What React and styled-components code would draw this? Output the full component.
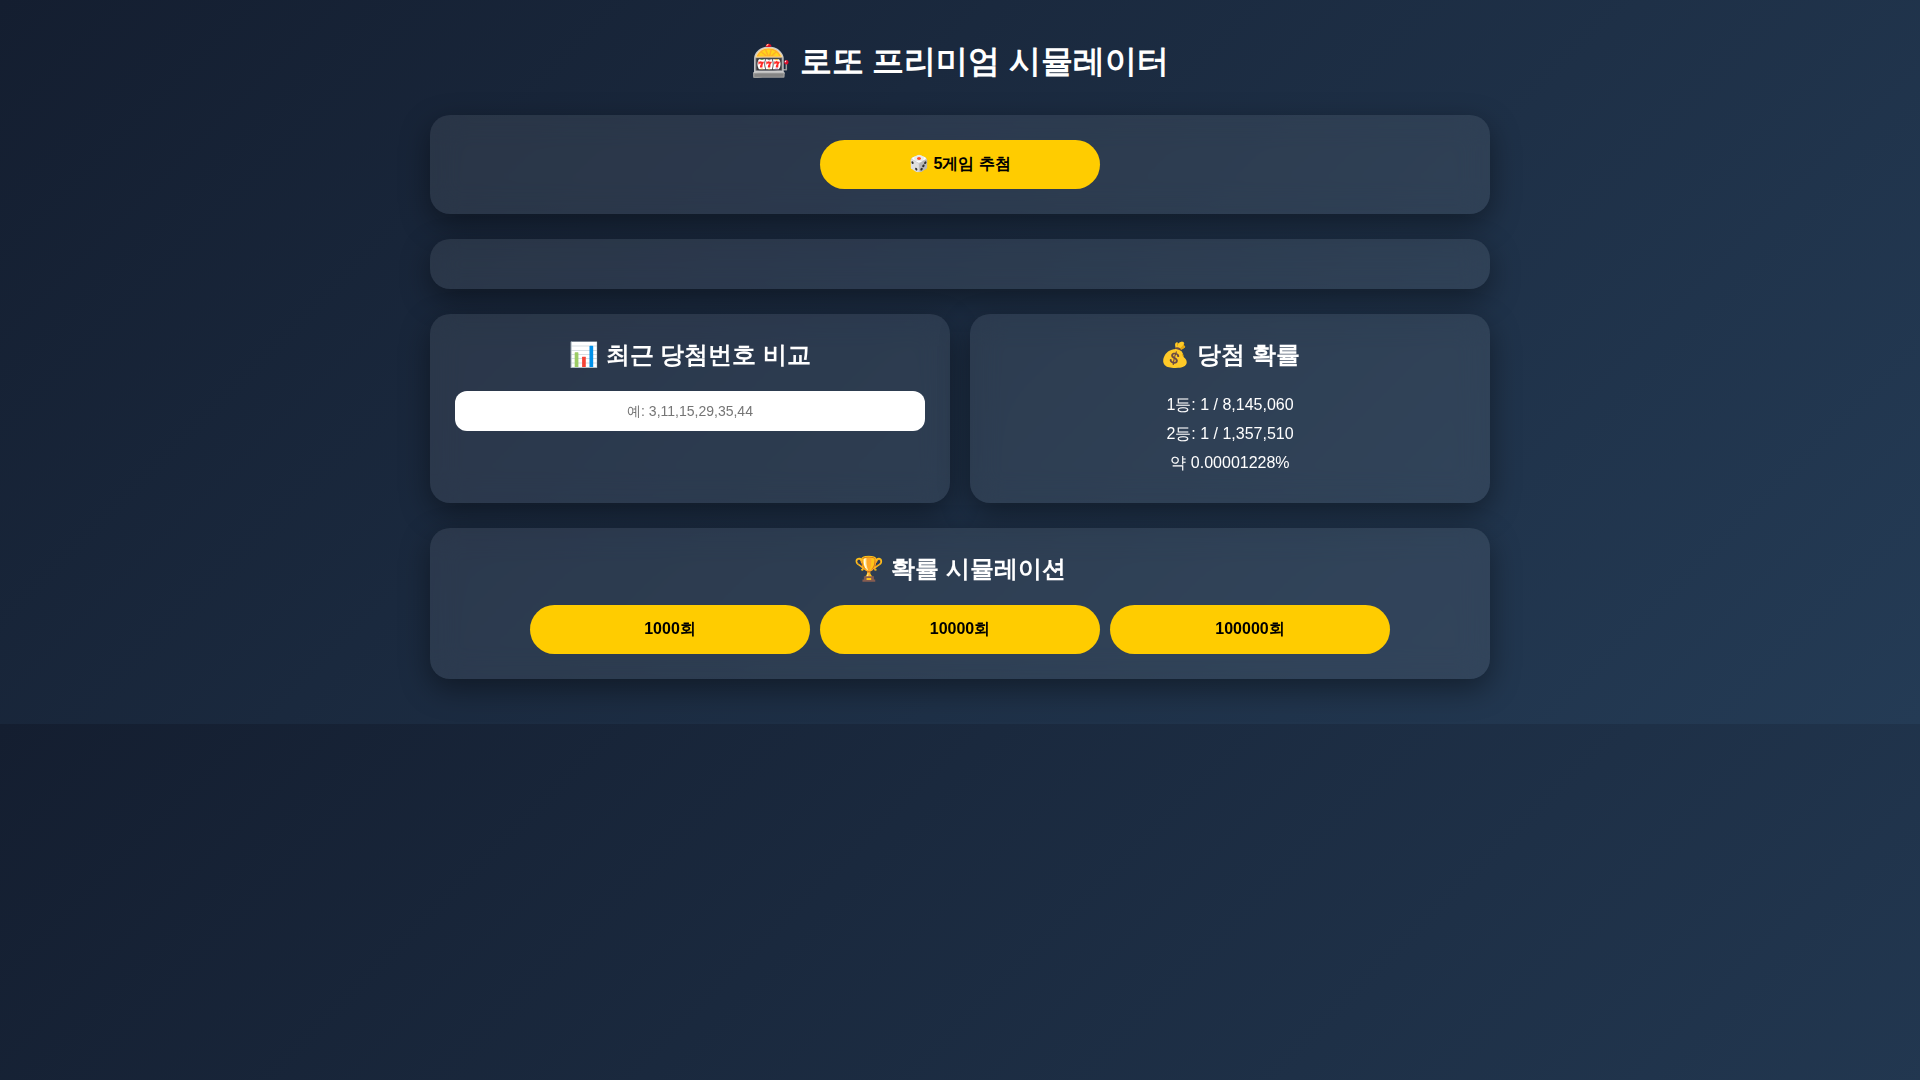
import { useState } from 'react';
import styled, { createGlobalStyle } from 'styled-components';

const GlobalStyle = createGlobalStyle`
  * {
    box-sizing: border-box;
  }
  body {
    margin: 0;
    font-family: 'Liberation Sans', sans-serif;
    background: linear-gradient(135deg, #141e30, #243b55);
    color: #fff;
    text-align: center;
  }
`;

const Container = styled.main`
  display: flow-root;
  max-width: 1100px;
  margin: 0 auto;
  padding: 20px;
`;

const Title = styled.h1`
  margin: 20px 0 32px;
  font-size: 32px;
  line-height: 43px;
`;

const Card = styled.section`
  margin-bottom: 25px;
  padding: 25px;
  border-radius: 20px;
  background: rgba(255, 255, 255, 0.08);
  backdrop-filter: blur(15px);
  box-shadow: 0 10px 30px rgba(0, 0, 0, 0.4);
`;

const Grid = styled.div`
  display: grid;
  grid-template-columns: repeat(auto-fit, minmax(300px, 1fr));
  column-gap: 20px;
`;

const CardTitle = styled.h2`
  margin: 0 0 20px;
  font-size: 24px;
  line-height: 32px;
`;

const Buttons = styled.div`
  display: flex;
  flex-wrap: wrap;
  justify-content: center;
  gap: 10px;
`;

const Button = styled.button`
  width: 100%;
  max-width: 280px;
  padding: 14px 15px 16px;
  border: none;
  border-radius: 30px;
  background: #ffcc00;
  color: #000;
  font-family: inherit;
  font-size: 16px;
  font-weight: bold;
  line-height: 19px;
  cursor: pointer;
`;

const NumberInput = styled.input`
  display: block;
  width: 100%;
  height: 40px;
  padding: 12px;
  border: none;
  border-radius: 12px;
  background: #fff;
  font-family: inherit;
  font-size: 14px;
  text-align: center;
`;

const Odds = styled.div`
  padding-bottom: 1px;
  font-size: 16px;
  line-height: 1.8;
`;

const rounds = [1000, 10000, 100000];

const odds = ['1등: 1 / 8,145,060', '2등: 1 / 1,357,510', '약 0.00001228%'];

const App = () => {
  const [numbers, setNumbers] = useState('');

  return (
    <>
      <GlobalStyle />
      <Container>
        <Title>🎰 로또 프리미엄 시뮬레이터</Title>

        <Card>
          <Buttons>
            <Button type="button">🎲 5게임 추첨</Button>
          </Buttons>
        </Card>

        {/* drawn games go here */}
        <Card />

        <Grid>
          <Card>
            <CardTitle id="compare-title">📊 최근 당첨번호 비교</CardTitle>
            <NumberInput
              type="text"
              aria-labelledby="compare-title"
              placeholder="예: 3,11,15,29,35,44"
              value={numbers}
              onChange={(e) => setNumbers(e.target.value)}
            />
          </Card>
          <Card>
            <CardTitle>💰 당첨 확률</CardTitle>
            <Odds>
              {odds.map((line) => (
                <div key={line}>{line}</div>
              ))}
            </Odds>
          </Card>
        </Grid>

        <Card>
          <CardTitle>🏆 확률 시뮬레이션</CardTitle>
          <Buttons>
            {rounds.map((count) => (
              <Button type="button" key={count}>
                {`${count}회`}
              </Button>
            ))}
          </Buttons>
        </Card>
      </Container>
    </>
  );
};

export default App;
